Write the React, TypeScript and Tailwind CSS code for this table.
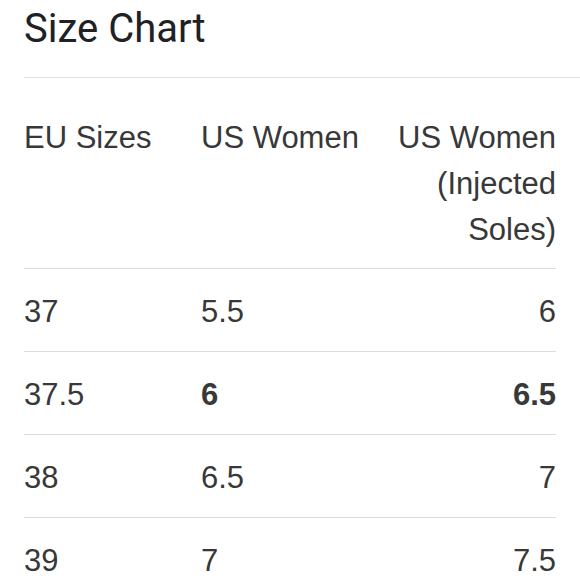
import React from "react";

type Row = { eu: string; us: string; injected: string; bold?: boolean };

const rows: Row[] = [
  { eu: "37", us: "5.5", injected: "6" },
  { eu: "37.5", us: "6", injected: "6.5", bold: true },
  { eu: "38", us: "6.5", injected: "7" },
  { eu: "39", us: "7", injected: "7.5" },
];

const App: React.FC = () => (
  <div className="w-[580px] h-[580px] overflow-hidden bg-white font-['Liberation_Sans',Arial,sans-serif]">
    <div className="pl-6 pt-[6px]">
      <h1 className="font-['Roboto',sans-serif] text-[40px] leading-[45px] text-[#202124] pb-[26px] border-b border-[#e3e3e3]">
        Size Chart
      </h1>
    </div>

    <div className="ml-6 w-[532px] text-[31px] leading-[46px] text-[#383838]">
      <div className="grid grid-cols-[177px_1fr_170px] pt-[37px] pb-[15px] border-b border-[#dcdcdc]">
        <div>EU Sizes</div>
        <div>US Women</div>
        <div className="text-right">US Women (Injected Soles)</div>
      </div>

      {rows.map((r) => (
        <div
          key={r.eu}
          className="grid grid-cols-[177px_1fr_170px] pt-[20px] pb-[16px] border-b border-[#dcdcdc]"
        >
          <div>{r.eu}</div>
          <div className={r.bold ? "font-bold" : ""}>{r.us}</div>
          <div className={r.bold ? "text-right font-bold" : "text-right"}>{r.injected}</div>
        </div>
      ))}
    </div>
  </div>
);

export default App;
